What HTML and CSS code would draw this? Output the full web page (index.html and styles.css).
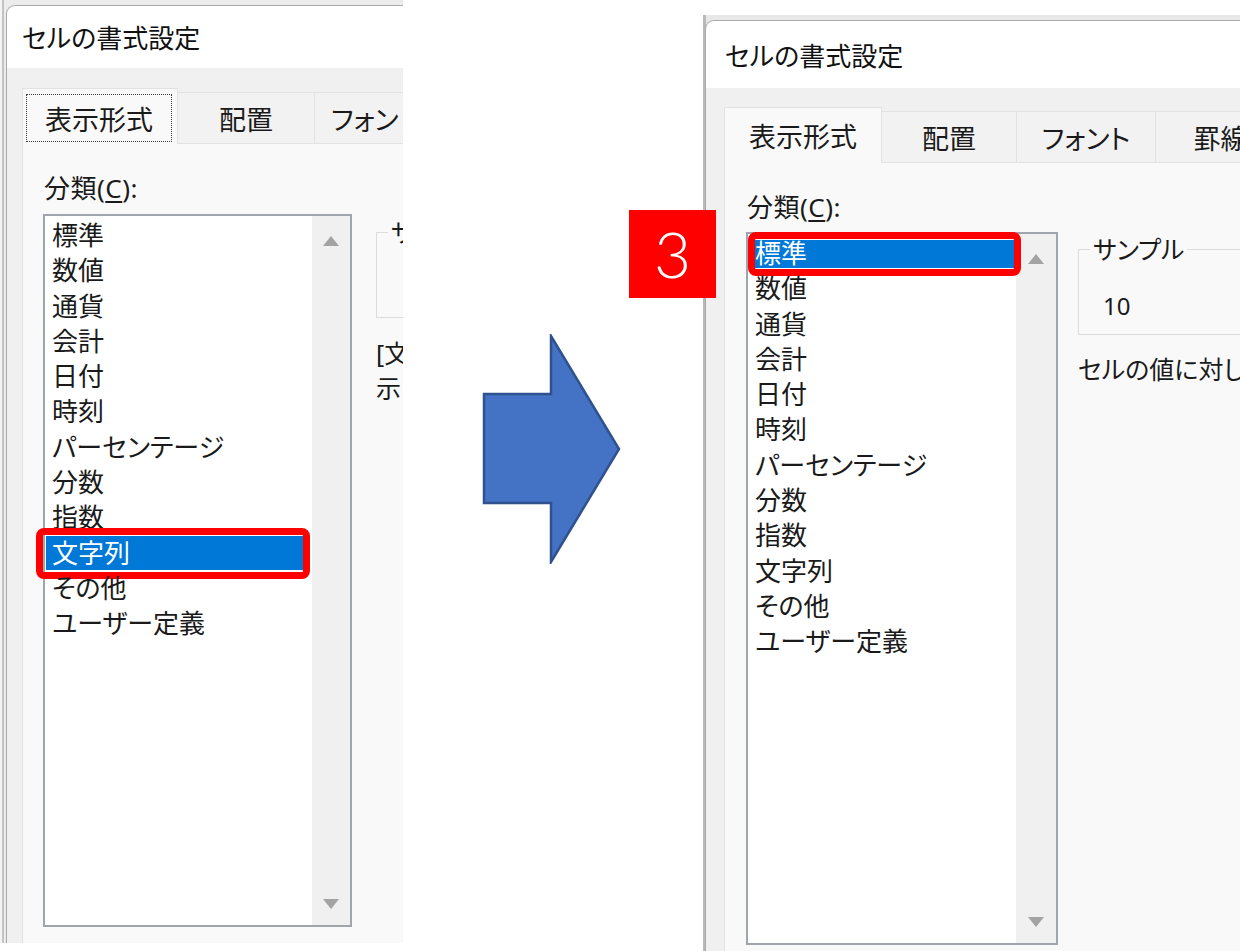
FILE: index.html
```html
<!DOCTYPE html>
<html lang="ja">
<head>
<meta charset="utf-8">
<title>セルの書式設定</title>
<link rel="stylesheet" href="styles.css">
</head>
<body>
<div class="stage">
  <div class="shot shot-a">
    <div class="dialog">
      <div class="titlebar">セルの書式設定</div>
      <div class="dlg-body">
        <div class="tabs">
          <div class="tab active t1"><span class="focus">表示形式</span></div>
          <div class="tab t2">配置</div>
          <div class="tab t3">フォント</div>
        </div>
        <div class="panel">
          <div class="cat">
            <div class="cat-label">分類(<u>C</u>):</div>
            <div class="listbox">
              <ul class="items">
                <li>標準</li>
                <li>数値</li>
                <li>通貨</li>
                <li>会計</li>
                <li>日付</li>
                <li>時刻</li>
                <li>パーセンテージ</li>
                <li>分数</li>
                <li>指数</li>
                <li class="sel mark">文字列</li>
                <li>その他</li>
                <li>ユーザー定義</li>
              </ul>
              <div class="sb"><span class="tri-up"></span><span class="tri-down"></span></div>
            </div>
          </div>
          <div class="side">
            <fieldset class="sample"><legend>サンプル</legend><div class="sample-val"></div></fieldset>
            <p class="desc">[文字列] に設定したセルでは、数値も文字列として扱われ、入力したとおりに表<br>示されます。</p>
          </div>
        </div>
      </div>
    </div>
  </div>

  <svg class="arrow" width="139" height="230" viewBox="-2 -2 139 230">
    <polygon points="0,58 67,58 67,0 135,113 67,226 67,167 0,167" fill="#4472c4" stroke="#2f528f" stroke-width="2.5" stroke-linejoin="miter"/>
  </svg>

  <div class="shot shot-b">
    <div class="dialog">
      <div class="titlebar">セルの書式設定</div>
      <div class="dlg-body">
        <div class="tabs">
          <div class="tab active t1">表示形式</div>
          <div class="tab t2">配置</div>
          <div class="tab t3">フォント</div>
          <div class="tab t4">罫線</div>
        </div>
        <div class="panel">
          <div class="cat">
            <div class="cat-label">分類(<u>C</u>):</div>
            <div class="listbox">
              <ul class="items">
                <li class="sel mark">標準</li>
                <li>数値</li>
                <li>通貨</li>
                <li>会計</li>
                <li>日付</li>
                <li>時刻</li>
                <li>パーセンテージ</li>
                <li>分数</li>
                <li>指数</li>
                <li>文字列</li>
                <li>その他</li>
                <li>ユーザー定義</li>
              </ul>
              <div class="sb"><span class="tri-up"></span><span class="tri-down"></span></div>
            </div>
          </div>
          <div class="side">
            <fieldset class="sample"><legend>サンプル</legend><div class="sample-val">10</div></fieldset>
            <p class="desc">セルの値に対して特定の表示形式を設定しません。</p>
          </div>
        </div>
      </div>
    </div>
  </div>

  <div class="badge">3</div>
</div>
</body>
</html>
```

FILE: styles.css
```css
* { box-sizing: border-box; }
html, body { margin: 0; height: 100%; }
body {
  background: #ffffff;
  overflow: hidden;
  font-family: "Noto Sans", "Noto Sans CJK JP", sans-serif;
  font-feature-settings: "palt";
  color: #1a1a1a;
}

.stage {
  position: relative;
  display: flex;
  align-items: flex-start;
  width: 1240px;
  height: 951px;
}

.shot {
  flex: none;
  overflow: hidden;
}
.shot-a {
  width: 403px;
  height: 943px;
  padding: 5px 0 0 6px;
  background: linear-gradient(to right, #f4f4f4 0 2px, #c4c4c4 2px 4px, #ececec 4px);
}
.shot-b {
  width: 537px;
  height: 936px;
  margin-left: 82px;
  margin-top: 15px;
  padding: 5px 0 0 2px;
  background: linear-gradient(to right, #b9b9b9 0 3px, #e8e8e8 3px);
}

.dialog {
  width: 640px;
  height: 100%;
  background: #ffffff;
  border: 1px solid #a9a9a9;
  border-right: 0;
  border-bottom: 0;
  border-top-left-radius: 9px;
  display: flex;
  flex-direction: column;
  overflow: hidden;
}

.titlebar {
  flex: none;
  display: flex;
  align-items: center;
  font-size: 26px;
  color: #111111;
}
.shot-a .titlebar { height: 62px; padding-left: 15px; }
.shot-b .titlebar { height: 67px; padding-left: 19px; }

.dlg-body {
  flex: 1;
  background: #f0f0f0;
  display: flex;
  flex-direction: column;
}
.shot-a .dlg-body { padding: 20px 0 0 15px; }
.shot-b .dlg-body { padding: 19px 0 0 18px; }

.tabs {
  flex: none;
  display: flex;
  align-items: flex-end;
  height: 55px;
}
.tab {
  flex: none;
  height: 51px;
  border: 1px solid #e2e2e2;
  border-left: 0;
  border-bottom: 0;
  background: #f2f2f2;
  display: flex;
  align-items: center;
  justify-content: center;
  font-size: 27px;
  color: #1a1a1a;
}
.tab.active {
  position: relative;
  z-index: 1;
  height: 56px;
  margin-bottom: -1px;
  background: #f9f9f9;
  border-left: 1px solid #e2e2e2;
}
.shot-a .t1 { width: 156px; padding: 5px 5px 2px 3px; }
.shot-a .t2 { width: 137px; }
.shot-a .t3 { width: 140px; justify-content: flex-start; padding-left: 16px; }
.shot-b .t1 { width: 158px; }
.shot-b .t2 { width: 135px; }
.shot-b .t3 { width: 139px; }
.shot-b .t4 { width: 130px; }

.focus {
  width: 100%;
  height: 100%;
  border: 1px dotted #3a3a3a;
  display: flex;
  align-items: center;
  justify-content: center;
}

.panel {
  flex: 1;
  background: #f9f9f9;
  border-top: 1px solid #e2e2e2;
  border-left: 1px solid #e2e2e2;
  display: flex;
  align-items: flex-start;
}
.shot-a .panel { padding-left: 20px; }
.shot-b .panel { padding-left: 21px; }

.cat-label {
  font-size: 26px;
  line-height: 32px;
  margin-top: 28px;
  padding-left: 1px;
  letter-spacing: 0.5px;
}
.cat-label u { text-underline-offset: 3px; text-decoration-thickness: 1.5px; }

.listbox {
  display: flex;
  height: 713px;
  border: 2px solid #a0a5ab;
  background: #ffffff;
}
.shot-a .listbox { width: 309px; margin-top: 10px; }
.shot-b .listbox { width: 312px; margin-top: 9px; }

.items {
  flex: 1;
  list-style: none;
  margin: 0;
  padding: 2px 0 0;
}
.items li {
  position: relative;
  height: 35.3px;
  line-height: 35.3px;
  font-size: 26px;
  white-space: nowrap;
  color: #1a1a1a;
}
.shot-a .items li { margin: 0 9px 0 1px; padding-left: 6px; }
.shot-b .items li { margin: 0 0 0 6px; padding-left: 1px; }

.items li.sel {
  color: #ffffff;
  background: linear-gradient(#0078d7, #0078d7) no-repeat center / 100% 34px;
}
.shot-b .items li.sel {
  background-size: 100% 28px;
}

.items li.mark::after {
  content: "";
  position: absolute;
  border: 7px solid #ff0000;
  border-radius: 8px;
}
.shot-a .items li.mark::after { left: -10px; right: -7px; top: -8px; bottom: -8px; }
.shot-b .items li.mark::after { left: -6px; right: -5px; top: -4px; bottom: -5px; }

.sb {
  flex: none;
  background: #f0f0f0;
  display: flex;
  flex-direction: column;
  justify-content: space-between;
  align-items: center;
}
.shot-a .sb { width: 38px; padding: 20px 0 16px; }
.shot-b .sb { width: 40px; padding: 20px 0 16px; }

.tri-up, .tri-down {
  width: 0;
  height: 0;
  border-left: 8px solid transparent;
  border-right: 8px solid transparent;
}
.tri-up { border-bottom: 10px solid #a3a3a3; }
.tri-down { border-top: 10px solid #a3a3a3; }

.side { flex: none; }
.shot-a .side { margin-left: 24px; margin-top: 74px; }
.shot-b .side { margin-left: 20px; margin-top: 72px; }

.sample {
  margin: 0;
  padding: 0;
  width: 420px;
  min-width: 0;
  border: 1px solid #dcdcdc;
}
.sample legend {
  font-size: 25px;
  line-height: 28px;
  padding: 0 3px;
  margin-left: 11px;
  color: #1a1a1a;
}
.sample-val {
  height: 71px;
  padding: 27px 0 0 24px;
  font-size: 24px;
  line-height: 32px;
}

.desc {
  margin: 18px 0 0;
  font-size: 25px;
  line-height: 35px;
  white-space: nowrap;
}
.shot-b .desc { margin-top: 17px; }

.arrow {
  flex: none;
  margin-left: 79px;
  margin-top: 334px;
}

.badge {
  position: absolute;
  left: 629px;
  top: 210px;
  width: 87px;
  height: 88px;
  background: #ff0000;
  color: #ffffff;
  font-family: "Lato", "Liberation Sans", sans-serif;
  font-weight: 300;
  font-size: 64px;
  line-height: 88px;
  text-align: center;
}
```
